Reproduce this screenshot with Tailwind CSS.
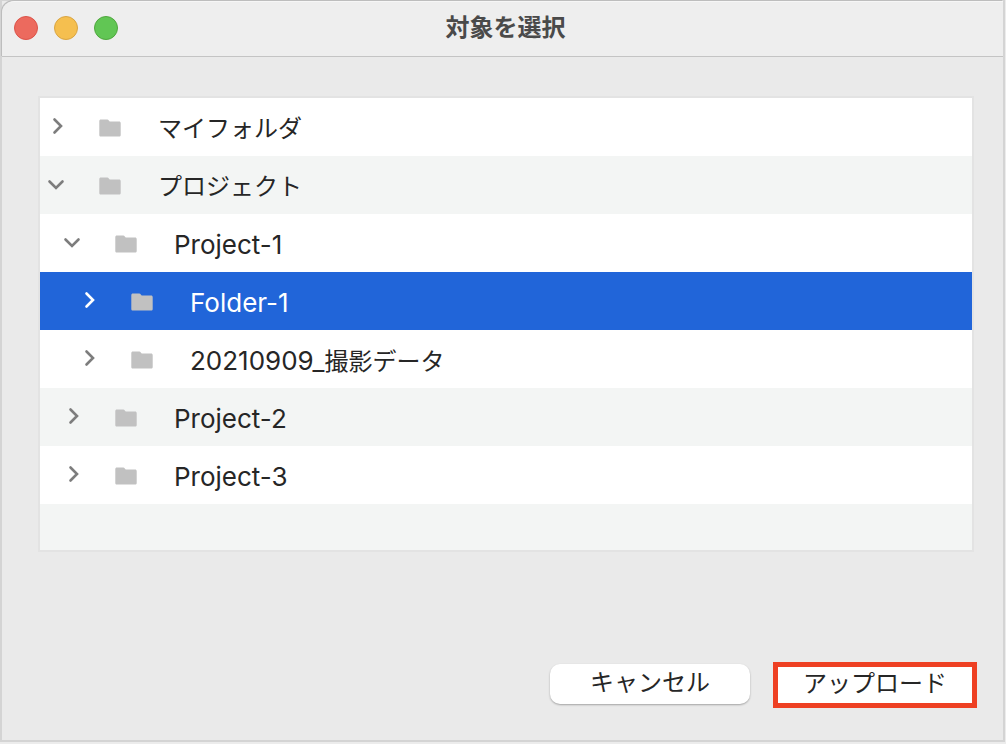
<!DOCTYPE html>
<html lang="ja">
<head>
  <meta charset="UTF-8">
  <meta name="viewport" content="width=device-width, initial-scale=1.0">
  <title>対象を選択</title>
  <script src="https://cdn.jsdelivr.net/npm/@tailwindcss/browser@4"></script>
</head>
<body class="h-screen bg-[#ececec] pr-px pb-[2px] font-['Inter','Noto_Sans_CJK_JP',sans-serif] text-[#262626]">

  <!-- shared icons -->
  <svg class="hidden">
    <symbol id="chevron" viewBox="0 0 20 20">
      <path d="M6.5 3.5 L13 10 L6.5 16.5" fill="none" stroke="currentColor" stroke-width="2.6" stroke-linecap="round" stroke-linejoin="miter"/>
    </symbol>
    <symbol id="folder" viewBox="0 0 22 18">
      <path d="M2 0.5 H8.2 C9 0.5 9.4 0.8 9.8 1.4 L10.4 2.2 C10.7 2.5 11 2.6 11.5 2.6 H20 C21.1 2.6 21.7 3.2 21.7 4.2 V15.9 C21.7 16.9 21.1 17.5 20 17.5 H2 C0.9 17.5 0.3 16.9 0.3 15.9 V2.2 C0.3 1.1 0.9 0.5 2 0.5 Z" fill="#c1c1c1"/>
    </symbol>
  </svg>

  <div class="flex h-full flex-col border-2 border-t border-[#d4d4d4] bg-[#eaeaea]">
    <header class="grid h-14 shrink-0 grid-cols-[1fr_auto_1fr] items-center rounded-tl-xl border-t border-b border-t-[#f6f6f6] border-b-[#c4c4c4] bg-[#eeeeee] pr-1.5 pb-0.5 pl-3 shadow-[-1px_-1px_0_#bdbdbd]">
      <div class="flex gap-4">
        <button aria-label="閉じる" class="size-6 rounded-full border border-[#dc5349] bg-[#ec6a5e]"></button>
        <button aria-label="しまう" class="size-6 rounded-full border border-[#d9a543] bg-[#f5bf4f]"></button>
        <button aria-label="拡大" class="size-6 rounded-full border border-[#4fa73e] bg-[#61c654]"></button>
      </div>
      <h1 class="text-2xl font-bold text-[#4a4a4a]">対象を選択</h1>
    </header>

    <main class="flex flex-1 flex-col pt-[39px] pr-[29px] pl-9">
      <ul role="tree" aria-label="対象" class="border-2 border-[#e3e3e3] bg-white text-[26px] leading-8">
        <li role="treeitem" aria-expanded="false" class="flex h-[58px] items-center pt-0.5 pl-2">
          <button aria-label="開く" class="mb-1 size-5 text-[#7d7d7d]"><svg class="size-5"><use href="#chevron"/></svg></button>
          <svg class="ml-[31px] h-[18px] w-[22px]"><use href="#folder"/></svg>
          <span class="ml-[37px] pt-0.5 text-2xl">マイフォルダ</span>
        </li>
        <li role="treeitem" aria-expanded="true" class="flex h-[58px] items-center bg-[#f3f5f4] pt-0.5 pl-1.5">
          <button aria-label="閉じる" class="mb-0.5 size-5 text-[#7d7d7d]"><svg class="size-5 rotate-90"><use href="#chevron"/></svg></button>
          <svg class="ml-[33px] h-[18px] w-[22px]"><use href="#folder"/></svg>
          <span class="ml-[37px] pt-0.5 text-2xl">プロジェクト</span>
        </li>
        <li role="treeitem" aria-expanded="true" class="flex h-[58px] items-center pt-0.5 pl-[22px]">
          <button aria-label="閉じる" class="mb-0.5 size-5 text-[#7d7d7d]"><svg class="size-5 rotate-90"><use href="#chevron"/></svg></button>
          <svg class="ml-[33px] h-[18px] w-[22px]"><use href="#folder"/></svg>
          <span class="ml-[37px] pt-0.5">Project-1</span>
        </li>
        <li role="treeitem" aria-expanded="false" aria-selected="true" class="flex h-[58px] items-center bg-[#2165d9] pt-0.5 pl-10 text-white">
          <button aria-label="開く" class="mb-1 size-5"><svg class="size-5"><use href="#chevron"/></svg></button>
          <svg class="ml-[31px] h-[18px] w-[22px]"><use href="#folder"/></svg>
          <span class="ml-[37px] pt-0.5">Folder-1</span>
        </li>
        <li role="treeitem" aria-expanded="false" class="flex h-[58px] items-center pt-0.5 pl-10">
          <button aria-label="開く" class="mb-1 size-5 text-[#7d7d7d]"><svg class="size-5"><use href="#chevron"/></svg></button>
          <svg class="ml-[31px] h-[18px] w-[22px]"><use href="#folder"/></svg>
          <span class="ml-[37px] pt-0.5">20210909_<span class="text-2xl">撮影データ</span></span>
        </li>
        <li role="treeitem" aria-expanded="false" class="flex h-[58px] items-center bg-[#f3f5f4] pt-0.5 pl-6">
          <button aria-label="開く" class="mb-1 size-5 text-[#7d7d7d]"><svg class="size-5"><use href="#chevron"/></svg></button>
          <svg class="ml-[31px] h-[18px] w-[22px]"><use href="#folder"/></svg>
          <span class="ml-[37px] pt-0.5">Project-2</span>
        </li>
        <li role="treeitem" aria-expanded="false" class="flex h-[58px] items-center pt-0.5 pl-6">
          <button aria-label="開く" class="mb-1 size-5 text-[#7d7d7d]"><svg class="size-5"><use href="#chevron"/></svg></button>
          <svg class="ml-[31px] h-[18px] w-[22px]"><use href="#folder"/></svg>
          <span class="ml-[37px] pt-0.5">Project-3</span>
        </li>
        <li role="presentation" class="h-[46px] bg-[#f3f5f4]"></li>
      </ul>

      <div class="mt-auto -mr-[3px] flex items-center justify-end gap-[23px] pb-8">
        <button class="mb-0.5 h-10 w-[200px] rounded-[10px] bg-white pb-0.5 text-2xl shadow-[0_1px_2px_rgba(0,0,0,0.3)]">キャンセル</button>
        <button class="h-[46px] w-[204px] border-5 border-[#ee4023] bg-white pb-0.5 text-2xl">アップロード</button>
      </div>
    </main>
  </div>

</body>
</html>
